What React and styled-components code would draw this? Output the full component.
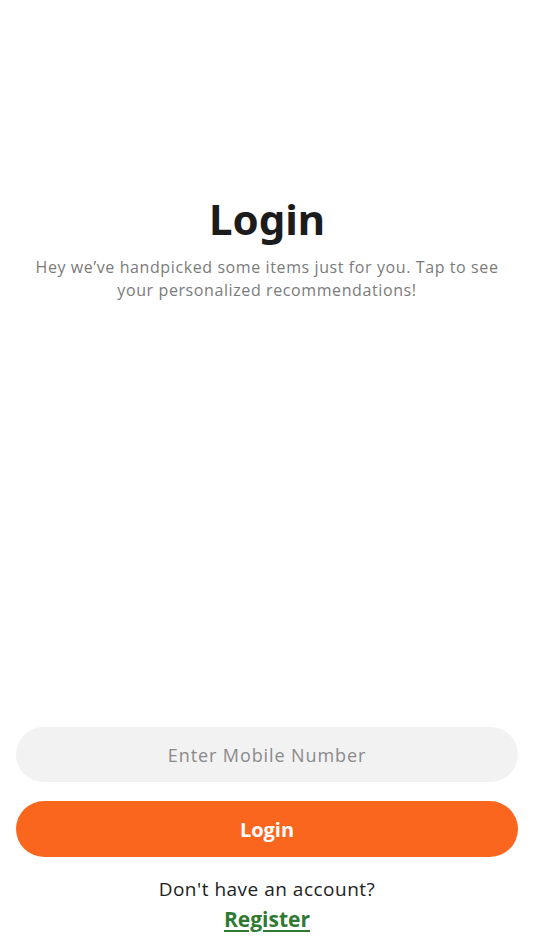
import React from 'react';
import styled, { createGlobalStyle } from 'styled-components';

const GlobalStyle = createGlobalStyle`
  html, body {
    margin: 0;
    padding: 0;
    background-color: #ffffff;
  }
  * {
    box-sizing: border-box;
  }
`;

const PAGE = styled.div`
  min-height: 100vh;
  display: flex;
  flex-direction: column;
  padding: 194px 16px 17px;
  font-family: 'Open Sans', 'Noto Sans', sans-serif;
  background-color: #ffffff;
`;

const HEADER = styled.header`
  display: flex;
  flex-direction: column;
  align-items: center;
  text-align: center;
`;

const TITLE = styled.h1`
  margin: 0;
  font-family: 'Noto Sans', sans-serif;
  font-size: 42px;
  line-height: 50px;
  font-weight: 700;
  color: #1c1c1c;
`;

const SUBTITLE = styled.p`
  margin: 12px 0 0;
  max-width: 490px;
  font-size: 16px;
  line-height: 23px;
  letter-spacing: 0.6px;
  color: #7b7b7b;
`;

const SPACER = styled.div`
  flex: 1;
`;

const FORM = styled.form`
  display: flex;
  flex-direction: column;
  gap: 19px;
`;

const INPUT = styled.input`
  width: 100%;
  height: 55px;
  border: none;
  outline: none;
  border-radius: 28px;
  background-color: #f2f2f2;
  text-align: center;
  font-family: 'Open Sans', 'Noto Sans', sans-serif;
  font-size: 18px;
  letter-spacing: 0.9px;
  color: #333333;

  &::placeholder {
    color: #8a8a8a;
  }
`;

const BUTTON = styled.button`
  width: 100%;
  height: 56px;
  border: none;
  border-radius: 28px;
  background-color: #fb661e;
  color: #ffffff;
  font-family: 'Open Sans', 'Noto Sans', sans-serif;
  font-size: 20px;
  font-weight: 700;
  cursor: pointer;
`;

const FOOTER = styled.div`
  display: flex;
  flex-direction: column;
  align-items: center;
  margin-top: 20px;
`;

const PROMPT = styled.span`
  font-size: 19px;
  line-height: 24px;
  letter-spacing: 0.5px;
  color: #222222;
`;

const LINK = styled.a`
  margin-top: 4px;
  font-size: 21px;
  line-height: 28px;
  font-weight: 700;
  color: #2f7a31;
  text-decoration: underline;
  text-underline-offset: 3px;
  cursor: pointer;
`;

export default function App() {
  return (
    <>
      <GlobalStyle />
      <PAGE>
        <HEADER>
          <TITLE>Login</TITLE>
          <SUBTITLE>
            Hey we’ve handpicked some items just for you. Tap to see your personalized
            recommendations!
          </SUBTITLE>
        </HEADER>
        <SPACER />
        <FORM onSubmit={(e) => e.preventDefault()}>
          <INPUT type='tel' placeholder='Enter Mobile Number' />
          <BUTTON type='submit'>Login</BUTTON>
        </FORM>
        <FOOTER>
          <PROMPT>Don't have an account?</PROMPT>
          <LINK>Register</LINK>
        </FOOTER>
      </PAGE>
    </>
  );
}
